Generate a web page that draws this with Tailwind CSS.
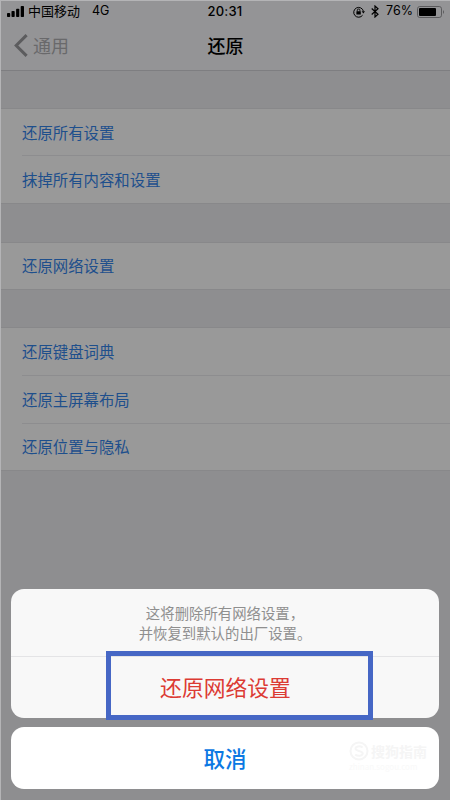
<!DOCTYPE html>
<html lang="zh-CN">
<head>
<meta charset="utf-8">
<title>还原</title>
<script src="https://cdn.jsdelivr.net/npm/@tailwindcss/browser@4"></script>
</head>
<body class="h-[800px] w-[450px] overflow-hidden bg-[#8e8e90] font-['Noto_Sans_CJK_SC',sans-serif]">
<div class="relative flex h-[800px] w-[450px] flex-col overflow-hidden border-l border-t border-[#b4b4b6]">
  <header class="flex h-[70px] shrink-0 flex-col border-b border-[#7e7e81] bg-[#949496]">
    <div class="grid h-[21px] grid-cols-3 items-center text-black">
      <div class="flex items-center pl-[6px] font-['Inter','Noto_Sans_CJK_SC',sans-serif] text-[13px] leading-none">
        <svg class="mr-[4px] h-[11px] w-[17px] shrink-0" viewBox="0 0 17 11"><rect x="0" y="7" width="3.2" height="4" rx=".8"/><rect x="4.5" y="5" width="3.2" height="6" rx=".8"/><rect x="9.1" y="2.7" width="3.2" height="8.3" rx=".8"/><rect x="13.7" y="0" width="3.3" height="11" rx=".8"/></svg>
        <span class="whitespace-nowrap">中国移动</span><span class="ml-[12px] text-[12.5px]">4G</span>
      </div>
      <div class="text-center font-['Inter',sans-serif] text-[13px] font-medium leading-none tracking-[0.2px] pr-[1px]">20:31</div>
      <div class="flex items-center justify-end pr-[5px]">
        <svg class="mr-[6px] h-[12px] w-[12px]" viewBox="0 0 12 12" fill="none" stroke="#000"><path d="M9.6 9.2A4.9 4.9 0 1 1 10.4 5.2"/><path d="M8.6 5.2H12L10.4 7.6Z" fill="#000" stroke="none"/><rect x="3.4" y="5.3" width="4.4" height="3.3" rx=".4" fill="#000" stroke="none"/><path d="M4.3 5.5V4.3a1.3 1.3 0 0 1 2.6 0v1.2" stroke-width=".9"/></svg>
        <svg class="mr-[7px] h-[13px] w-[8px]" viewBox="0 0 8 13" fill="none" stroke="#000" stroke-width="1.2"><path d="M.7 3.5 7 9.3 4 12V1L7 3.7.7 9.5"/></svg>
        <span class="mr-[4px] font-['Inter',sans-serif] text-[12.5px] leading-none">76%</span>
        <svg class="h-[12px] w-[28px]" viewBox="0 0 28 12"><rect x=".5" y=".5" width="24" height="11" rx="2.3" fill="none" stroke="#5b5b5d"/><rect x="2" y="2" width="17" height="8" rx="1"/><path d="M26 4q2 2 0 4z" fill="#5b5b5d"/></svg>
      </div>
    </div>
    <div class="grid grow grid-cols-3 items-center pb-[2px]">
      <div class="flex items-center pl-[13px] text-[#69696b]">
        <svg class="mr-[5px] h-[23px] w-[14px]" viewBox="0 0 14 23" fill="none" stroke="#5c5c5e" stroke-width="3"><path d="M12.6 1.1 2.2 11.5 12.6 21.9"/></svg>
        <span class="text-[18px] leading-none">通用</span>
      </div>
      <h1 class="text-center text-[18px] font-medium leading-none text-black">还原</h1>
    </div>
  </header>
  <main class="flex flex-col pt-[37px] text-[15.4px] text-[#1e4f8c]">
    <section class="mb-[38px] border-y border-[#88888a] bg-[#999999]">
      <div class="ml-[21px] flex h-[47px] items-center border-b border-[#8d8d8f] pt-px">还原所有设置</div>
      <div class="ml-[21px] flex h-[47px] items-center pt-px">抹掉所有内容和设置</div>
    </section>
    <section class="mb-[37px] border-y border-[#88888a] bg-[#999999]">
      <div class="ml-[21px] flex h-[46px] items-center">还原网络设置</div>
    </section>
    <section class="border-y border-[#88888a] bg-[#999999]">
      <div class="ml-[21px] flex h-[48px] items-center border-b border-[#8d8d8f]">还原键盘词典</div>
      <div class="ml-[21px] flex h-[48px] items-center border-b border-[#8d8d8f]">还原主屏幕布局</div>
      <div class="ml-[21px] flex h-[46px] items-center">还原位置与隐私</div>
    </section>
  </main>
  <div class="absolute inset-x-0 bottom-0 flex flex-col gap-[9px] pb-[11px] pl-[10px] pr-[11px]">
    <div class="h-[129px] rounded-[13px] bg-[#f8f8f8]">
      <p class="h-[68px] border-b border-[#e4e4e6] pt-[14px] text-center text-[14.4px] leading-[19.5px] text-[#8f8f8f]">这将删除所有网络设置，<br>并恢复到默认的出厂设置。</p>
      <button class="h-[61px] w-full pl-px text-[21.8px] text-[#dc3b34]">还原网络设置</button>
    </div>
    <div class="relative h-[62px] rounded-[13px] bg-white">
      <button class="h-full w-full text-[21.5px] font-medium text-[#0b78e3]">取消</button>
      <div class="absolute right-[13px] top-[14px] flex w-[77px] flex-col text-[#f5f5f5]">
        <div class="flex items-center gap-[2px]">
          <svg class="h-[20px] w-[20px] shrink-0" viewBox="0 0 20 20" fill="none" stroke="currentColor"><circle cx="10" cy="10" r="8.5" stroke-width="2"/><path d="M13.6 6.5C11 4.6 6.5 5.2 6.5 7.8s7.2 1.7 7.2 4.5-4.8 3.4-7.5 1.2" stroke-width="2"/></svg>
          <span class="whitespace-nowrap text-[14px] font-bold leading-[20px]">搜狗指南</span>
        </div>
        <span class="whitespace-nowrap text-[8px] leading-[12px] text-[#f9f9f9]">zhinan.sogou.com</span>
      </div>
    </div>
  </div>
  <div class="absolute left-[105px] top-[650px] h-[69px] w-[267px] border-[5px] border-[#4667c5]"></div>
</div>
</body>
</html>
